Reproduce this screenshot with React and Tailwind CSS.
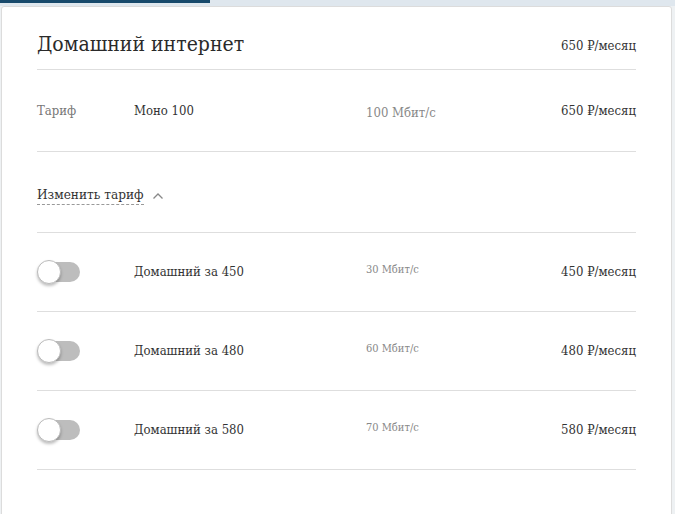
const FONT = "font-['DejaVu_Serif',serif] font-stretch-condensed";

function Toggle() {
  return (
    <div className="relative h-6 w-[43px] shrink-0">
      <div className="absolute left-[4px] top-[2px] h-5 w-[39px] rounded-full bg-[#bdbdbd]" />
      <div className="absolute left-0 top-0 h-6 w-6 rounded-full border border-[#bbb] bg-white shadow-[0_2px_3px_rgba(0,0,0,0.25)]" />
    </div>
  );
}

const plans = [
  { name: "Домашний за 450", speed: "30 Мбит/с", price: "450 ₽/месяц" },
  { name: "Домашний за 480", speed: "60 Мбит/с", price: "480 ₽/месяц" },
  { name: "Домашний за 580", speed: "70 Мбит/с", price: "580 ₽/месяц" },
];

export default function App() {
  return (
    <div className={`h-[514px] w-[675px] overflow-hidden bg-[#eef1f3] ${FONT}`}>
      <div className="flex h-[6px] bg-[#dfe7ee]">
        <div className="h-[3px] w-[210px] bg-[#184a6c]" />
      </div>
      <div className="ml-[1px] mr-[3px] h-[520px] rounded-[3px] border border-[#dcdcdc] bg-white px-[35px] pt-[23px]">
        <div className="flex h-[40px] items-start justify-between border-b border-[#dedede]">
          <h1 className="text-[21px] leading-[28px] text-[#2a2a2a]">Домашний интернет</h1>
          <span className="pt-[6px] text-[13px] text-[#333]">650 ₽/месяц</span>
        </div>

        <div className="flex h-[82px] items-center border-b border-[#dedede] text-[13px]">
          <span className="w-[97px] text-[#777]">Тариф</span>
          <span className="w-[232px] text-[#333]">Моно 100</span>
          <span className="flex-1 pt-[5px] text-[#888]">100 Мбит/с</span>
          <span className="text-[#333]">650 ₽/месяц</span>
        </div>

        <div className="flex h-[81px] items-center border-b border-[#dedede] pt-[5px]">
          <span className="border-b border-dashed border-[#999] pb-[1px] text-[13.5px] leading-[18px] text-[#333]">
            Изменить тариф
          </span>
          <svg className="ml-[8px] mt-[2px]" width="12" height="8" viewBox="0 0 12 8" fill="none">
            <path d="M1.5 6.5 6 2l4.5 4.5" stroke="#888" strokeWidth="1.3" />
          </svg>
        </div>

        {plans.map((p) => (
          <div key={p.name} className="flex h-[79px] items-center border-b border-[#dedede]">
            <div className="w-[97px]">
              <Toggle />
            </div>
            <span className="w-[232px] text-[13px] text-[#333]">{p.name}</span>
            <span className="flex-1 pb-[4px] text-[11px] text-[#888]">{p.speed}</span>
            <span className="text-[13px] text-[#333]">{p.price}</span>
          </div>
        ))}
      </div>
    </div>
  );
}
